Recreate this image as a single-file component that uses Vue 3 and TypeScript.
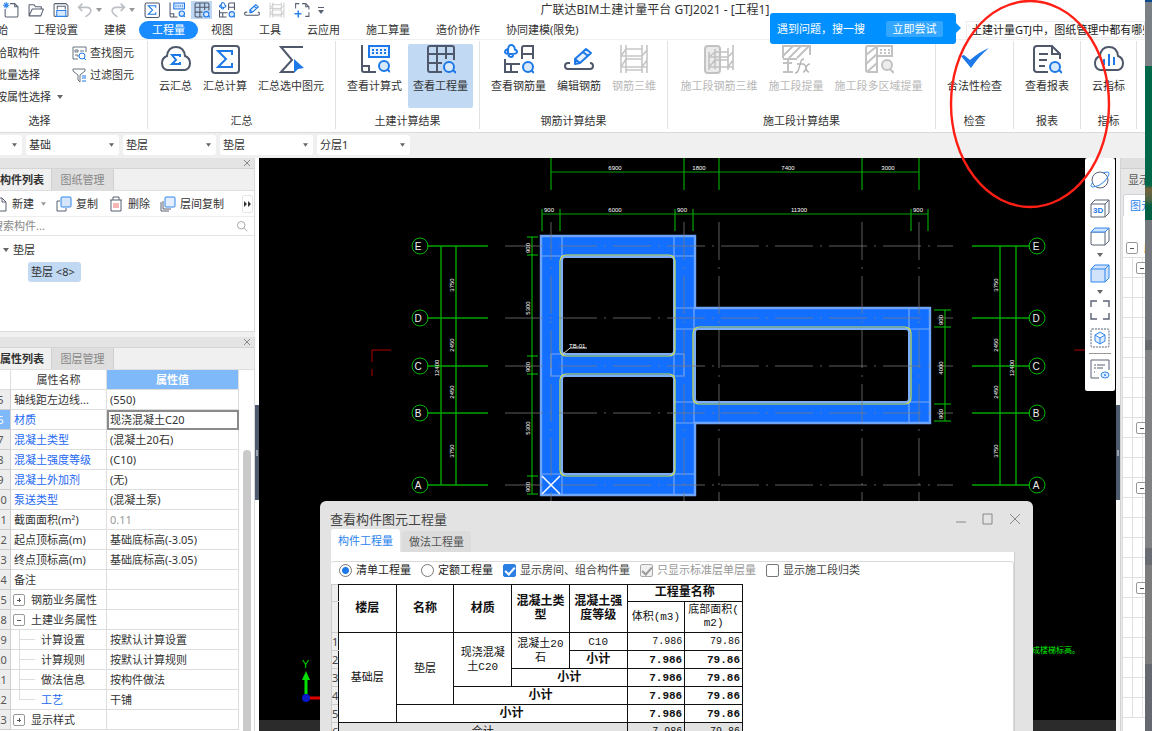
<script setup lang="ts">
import { ref } from 'vue'

interface RibbonItem { icon: string; label: string; active?: boolean; disabled?: boolean }
interface RibbonGroup { title: string; items: RibbonItem[]; wide?: boolean }
interface PropRow { no: string; name: string; value?: string; link?: boolean; kind?: 'plus' | 'minus' | 'child' | 'last'; faint?: boolean; current?: boolean }

const menuTabs = ['开始', '工程设置', '建模', '工程量', '视图', '工具', '云应用', '施工算量', '造价协作', '协同建模(限免)']
const activeTab = ref('工程量')

const quick = [
  { icon: 'new', label: '新建' }, { icon: 'open', label: '打开' }, { icon: 'save', label: '保存' },
  { icon: 'undo', label: '撤销', caret: true }, { icon: 'redo', label: '恢复', caret: true },
  { icon: 'sigma-box', label: '汇总计算' }, { icon: 'calc', label: '查看计算式' },
  { icon: 'grid', label: '查看工程量', active: true }, { icon: 'rebar', label: '查看钢筋量' },
  { icon: 'edit', label: '编辑钢筋' }, { icon: 'rebar3d', label: '钢筋三维', muted: true }, { icon: 'frame', label: '框选' },
]

const groups: RibbonGroup[] = [
  { title: '汇总', items: [
    { icon: 'cloud-sigma', label: '云汇总' }, { icon: 'sigma-box', label: '汇总计算' }, { icon: 'sigma-pick', label: '汇总选中图元' }] },
  { title: '土建计算结果', items: [
    { icon: 'calc', label: '查看计算式' }, { icon: 'grid', label: '查看工程量', active: true }] },
  { title: '钢筋计算结果', items: [
    { icon: 'rebar', label: '查看钢筋量' }, { icon: 'edit', label: '编辑钢筋' }, { icon: 'rebar3d', label: '钢筋三维', disabled: true }] },
  { title: '施工段计算结果', wide: true, items: [
    { icon: 'seg3d', label: '施工段钢筋三维', disabled: true }, { icon: 'segfx', label: '施工段提量', disabled: true },
    { icon: 'segmulti', label: '施工段多区域提量', disabled: true }] },
  { title: '检查', items: [{ icon: 'check', label: '合法性检查' }] },
  { title: '报表', items: [{ icon: 'report', label: '查看报表' }] },
  { title: '指标', items: [{ icon: 'cloud-bar', label: '云指标' }] },
]

const pickers = [
  { label: '楼层', value: '' }, { label: '构件大类', value: '基础' }, { label: '构件类型', value: '垫层' },
  { label: '构件', value: '垫层' }, { label: '分层', value: '分层1' },
]

const props: PropRow[] = [
  { no: '5', name: '轴线距左边线...', value: '(550)' },
  { no: '6', name: '材质', value: '现浇混凝土C20', link: true, current: true },
  { no: '7', name: '混凝土类型', value: '(混凝土20石)', link: true },
  { no: '8', name: '混凝土强度等级', value: '(C10)', link: true },
  { no: '9', name: '混凝土外加剂', value: '(无)', link: true },
  { no: '10', name: '泵送类型', value: '(混凝土泵)', link: true },
  { no: '11', name: '截面面积(m²)', value: '0.11', faint: true },
  { no: '12', name: '起点顶标高(m)', value: '基础底标高(-3.05)' },
  { no: '13', name: '终点顶标高(m)', value: '基础底标高(-3.05)' },
  { no: '14', name: '备注' },
  { no: '15', name: '钢筋业务属性', kind: 'plus' },
  { no: '18', name: '土建业务属性', kind: 'minus' },
  { no: '19', name: '计算设置', value: '按默认计算设置', kind: 'child' },
  { no: '20', name: '计算规则', value: '按默认计算规则', kind: 'child' },
  { no: '21', name: '做法信息', value: '按构件做法', kind: 'child' },
  { no: '22', name: '工艺', value: '干铺', kind: 'last', link: true },
  { no: '23', name: '显示样式', kind: 'plus' },
]

const treeRows = Array.from({ length: 24 }, (_, i) => (i === 0 ? 'root' : [1, 9, 12, 17].includes(i) ? 'node' : 'leaf'))

const axes = [
  { name: 'E', y: 246 }, { name: 'D', y: 318 }, { name: 'C', y: 366 }, { name: 'B', y: 413 }, { name: 'A', y: 485 },
]
const columns = [551, 684, 719, 862, 919]
const upperDims = [{ x: 615, t: '6900' }, { x: 699, t: '1800' }, { x: 788, t: '7400' }, { x: 888, t: '3000' }]
const lowerTicks = [542, 560, 675, 693, 911, 928]
const lowerDims = [{ x: 549, t: '900' }, { x: 615, t: '6000' }, { x: 682, t: '900' }, { x: 799, t: '11300' }, { x: 918, t: '900' }]
const leftTicks = [237, 255, 356, 374, 476, 494]
const rightTicks = [310, 327, 404, 421]
const sideDims = [
  { x: 530, y: 248, t: '900' }, { x: 530, y: 308, t: '5300' }, { x: 530, y: 367, t: '900' }, { x: 530, y: 428, t: '5300' }, { x: 530, y: 487, t: '900' },
  { x: 943, y: 320, t: '900' }, { x: 943, y: 368, t: '4000' }, { x: 943, y: 414, t: '900' },
  { x: 454, y: 285, t: '3750' }, { x: 454, y: 345, t: '2450' }, { x: 454, y: 392, t: '2450' }, { x: 454, y: 451, t: '3750' }, { x: 439, y: 368, t: '12400' },
  { x: 998, y: 285, t: '3750' }, { x: 998, y: 345, t: '2450' }, { x: 998, y: 392, t: '2450' }, { x: 998, y: 451, t: '3750' }, { x: 1014, y: 368, t: '12400' },
]

const mode = ref('bill')
const showRooms = ref(true)
const singleFloor = ref(true)
const bySegment = ref(false)
const question = ref('土建计量GTJ中，图纸管理中都有哪些')
</script>

<template>
  <div class="screen">
    <svg class="defs" aria-hidden="true">
      <symbol id="i-new" viewBox="0 0 30 30"><g fill="none" stroke="#596273" stroke-width="2"><path d="M13 3h9l6 6v17q0 2-2 2H6q-2 0-2-2V13M22 3v6h6" /></g><path d="M6 0v12M0 6h12M2 2l8 8M10 2l-8 8" stroke="#2f86ee" stroke-width="2" /></symbol>
      <symbol id="i-open" viewBox="0 0 30 30"><path d="M2 26V5h9l3 4h11v4M2 26l6-13h21l-5 13z" fill="none" stroke="#596273" stroke-width="2" stroke-linejoin="round" /></symbol>
      <symbol id="i-save" viewBox="0 0 30 30"><path d="M8 14V8h15v6" fill="none" stroke="#596273" stroke-width="2" /><path d="M2 26V5q0-2 2-2h20l4 4v19q0 1-2 1H4q-2 0-2-1z" fill="none" stroke="#596273" stroke-width="2" /><path d="M7 27V16h17v11z" fill="#d8e9fc" stroke="#2f86ee" stroke-width="2" /></symbol>
      <symbol id="i-undo" viewBox="0 0 30 30"><path d="M10 3L3 10l7 7M3 10h15q8 0 8 7 0 4-10 11" fill="none" stroke="#bcc0c6" stroke-width="3" /></symbol>
      <symbol id="i-redo" viewBox="0 0 30 30"><path d="M20 3l7 7-7 7M27 10H12q-8 0-8 7 0 4 10 11" fill="none" stroke="#bcc0c6" stroke-width="3" /></symbol>
      <symbol id="i-frame" viewBox="0 0 30 30"><g fill="none" stroke="#596273" stroke-width="2"><path d="M3 12V3h7M15 3h7l6 6v5M22 3v6h6M28 19v8h-7" /></g><path d="M8 16v13M1 22h13" stroke="#2f86ee" stroke-width="3" /></symbol>
      <symbol id="i-cloud-sigma" viewBox="0 0 30 30"><path d="M6 26q-5-1-5-7 0-5 5-7 1-9 9-9t9 9q5 2 5 7 0 6-5 7z" fill="none" stroke="#4f586b" stroke-width="2" /><path d="M19 13v-2h-8l4 5-4 4h8v-2" fill="none" stroke="#1d78e8" stroke-width="2" /></symbol>
      <symbol id="i-sigma-box" viewBox="0 0 30 30"><rect x="2" y="2" width="27" height="27" rx="3" fill="none" stroke="#4f586b" stroke-width="2" /><path d="M22 11V7H8l8 8-8 8h14v-4" fill="none" stroke="#1d78e8" stroke-width="2" /></symbol>
      <symbol id="i-sigma-pick" viewBox="0 0 30 30"><path d="M27 3H5l11 13L5 28h13" fill="none" stroke="#4f586b" stroke-width="2" /><path d="M18 15l10 9-6 1-4 4z" fill="#1d78e8" /></symbol>
      <symbol id="i-calc" viewBox="0 0 30 30"><path d="M2 1v25q0 2 2 2h12M2 22h7v6" fill="none" stroke="#4f586b" stroke-width="2" /><rect x="9" y="2" width="20" height="11" fill="#eaf3ff" stroke="#1d78e8" stroke-width="2" /><path d="M12 6h15M12 9h15" stroke="#1d78e8" stroke-width="2" stroke-dasharray="2 2" /><circle cx="24" cy="22" r="5" fill="#d9e9fd" stroke="#1d78e8" stroke-width="2" /><path d="M27 25l3 3" stroke="#1d78e8" stroke-width="2" /></symbol>
      <symbol id="i-grid" viewBox="0 0 30 30"><path d="M16 28H4q-2 0-2-2V4q0-2 2-2h22q2 0 2 2v12M2 10h26M2 19h14M11 2v26M20 2v13" fill="none" stroke="#4f586b" stroke-width="2" /><circle cx="23" cy="23" r="5" fill="#d9e9fd" stroke="#1d78e8" stroke-width="2" /><path d="M27 26l3 3" stroke="#1d78e8" stroke-width="2" /></symbol>
      <symbol id="i-rebar" viewBox="0 0 30 30"><path d="M11 5Q10 1 7 1 4 1 4 7t3 6q2 0 2-2M4 5Q1 6 1 8q0 2 6 2t6-2q0-2-3-3" fill="none" stroke="#1d78e8" stroke-width="2" /><path d="M18 15V4q0-2 2-2h9v13M18 10h11M1 15v14M1 20h15M7 20v9M1 28h13" fill="none" stroke="#4f586b" stroke-width="2" /><circle cx="24" cy="23" r="5" fill="#d9e9fd" stroke="#1d78e8" stroke-width="2" /><path d="M27 26l3 3" stroke="#1d78e8" stroke-width="2" /></symbol>
      <symbol id="i-edit" viewBox="0 0 30 30"><path d="M6 19H4q-3 0-3 3t3 3h22q3 0 3-3t-3-3" fill="none" stroke="#4f586b" stroke-width="2" /><path d="M11 20v-5L22 5l5 4-11 10zM11 15l5 4M19 8l5 4" fill="#e7f1fd" stroke="#1d78e8" stroke-width="2" stroke-linejoin="round" /></symbol>
      <symbol id="i-rebar3d" viewBox="0 0 30 30"><path d="M2 1v28M7 1v28M23 1v28M28 1v28M7 5h16M2 12h21M7 15h16M2 23h26M7 26h16M2 12l5-7M23 12l5-6M2 23l5-8M23 23l5-7" fill="none" stroke="#c6c6c6" stroke-width="1.6" /></symbol>
      <symbol id="i-seg3d" viewBox="0 0 30 30"><rect x="1" y="2" width="15" height="27" rx="3" fill="#ebebeb" stroke="#c2c2c2" stroke-width="2" /><path d="M5 8v18M11 5v20M24 4v22M29 1v25M11 8h13M5 13h19M11 16h13M5 23h24M5 13l6-5M24 13l5-5M5 23l6-7M24 23l5-7" fill="none" stroke="#c2c2c2" stroke-width="1.6" /></symbol>
      <symbol id="i-segfx" viewBox="0 0 30 30"><path d="M2 14V2h27v9M2 12L12 2M8 14L20 2M16 14L28 2M2 15h14M7 15v12M2 19h9M2 28h10" fill="none" stroke="#c2c2c2" stroke-width="2" /><path d="M14 29q3 0 4-5l2-7q1-2 3-2M16 20h6M22 20q2 0 3 4 1 4 3 4M29 20q-3 0-4 4-1 4-3 4" fill="none" stroke="#b5b5b5" stroke-width="1.4" /></symbol>
      <symbol id="i-segmulti" viewBox="0 0 30 30"><path d="M2 4q0-2 2-2h9v26H4q-2 0-2-2zM2 11l10-8M2 20l11-10M3 28l10-9M13 2h15v10H13" fill="none" stroke="#c2c2c2" stroke-width="2" /><path d="M16 6h11M16 9h11" stroke="#c2c2c2" stroke-width="2" stroke-dasharray="2 2" /><circle cx="23" cy="21" r="5" fill="#eee" stroke="#c2c2c2" stroke-width="2" /><path d="M26 25l4 4" stroke="#c2c2c2" stroke-width="2" /></symbol>
      <symbol id="i-check" viewBox="0 0 30 30"><path d="M1 12l3-1 6 5Q19 8 29 4 19 12 11 24z" fill="#1d78e8" /></symbol>
      <symbol id="i-report" viewBox="0 0 30 30"><path d="M16 28H5q-3 0-3-3V5q0-3 3-3h15l8 8v5M20 2v8h8M7 10h9M7 16h8M7 22h6" fill="none" stroke="#4f586b" stroke-width="2" /><circle cx="23" cy="23" r="5" fill="#d9e9fd" stroke="#1d78e8" stroke-width="2" /><path d="M27 26l3 3" stroke="#1d78e8" stroke-width="2" /></symbol>
      <symbol id="i-cloud-bar" viewBox="0 0 30 30"><path d="M6 26q-5-1-5-7 0-5 5-7 1-9 9-9t9 9q5 2 5 7 0 6-5 7z" fill="none" stroke="#4f586b" stroke-width="2" /><path d="M10 15v6M15 10v12M20 13v8" stroke="#1d78e8" stroke-width="2" /></symbol>
      <symbol id="i-find" viewBox="0 0 16 16"><path d="M7 14H2V2h13v5M4 5h3v2H4zM9 6h4M4 10h3v2" fill="none" stroke="#6a7280" /><circle cx="11" cy="11" r="3" fill="none" stroke="#1d78e8" /><path d="M13 13l2 2" stroke="#1d78e8" /></symbol>
      <symbol id="i-filter" viewBox="0 0 16 16"><path d="M2 2h12v2L9 8v7l-2-2V8L2 4z" fill="none" stroke="#6a7280" /><path d="M11 9h4M11 11h4M11 14h4" stroke="#1d78e8" /></symbol>
      <symbol id="i-page" viewBox="0 0 16 16"><path d="M1 2h9l4 4v9H1M10 2v4h4" fill="none" stroke="#596273" /></symbol>
      <symbol id="i-copy" viewBox="0 0 16 16"><path d="M4 5H1v10h9v-3" fill="none" stroke="#596273" /><rect x="5" y="1" width="10" height="10" rx="1" fill="#d5e6fb" stroke="#2f86ee" /></symbol>
      <symbol id="i-layer" viewBox="0 0 16 16"><path d="M1 6v9h8M3 5v8h8" fill="none" stroke="#596273" /><rect x="5" y="1" width="10" height="10" rx="1" fill="#e4effd" stroke="#2f86ee" /></symbol>
      <symbol id="i-trash" viewBox="0 0 16 16"><path d="M2 4h12M5 4V1h6v3M3 4v11h10V4" fill="none" stroke="#596273" /><path d="M6 7v5M8 7v5M10 7v5" stroke="#f06a6a" /></symbol>
      <symbol id="i-lens" viewBox="0 0 16 16"><circle cx="7" cy="7" r="5" fill="none" stroke="#8b8b8b" /><path d="M11 11l4 4" stroke="#8b8b8b" /></symbol>
      <symbol id="i-caret" viewBox="0 0 6 4"><path d="M0 0h6L3 4z" fill="currentColor" /></symbol>
      <symbol id="i-close" viewBox="0 0 8 8"><path d="M1 1l6 6M7 1L1 7" stroke="currentColor" /></symbol>
      <symbol id="i-orbit" viewBox="0 0 20 20"><circle cx="10" cy="10" r="8" fill="none" stroke="#596273" /><path d="M3 12q-4 5 0 5 6 0 12-6 6-8 3-9-2 0-5 1" fill="none" stroke="#2f86ee" /></symbol>
      <symbol id="i-cube3d" viewBox="0 0 20 20"><path d="M1 6h14v13H1zM1 6l4-4h14v13l-4 4M15 6l4-4" fill="none" stroke="#596273" /></symbol>
      <symbol id="i-cube" viewBox="0 0 20 20"><path d="M1 6h14v13H2l-1-1zM15 19l4-4V2" fill="none" stroke="#596273" /><path d="M1 6l4-4h14l-4 4z" fill="#cfe2fb" stroke="#2f86ee" /></symbol>
      <symbol id="i-solid" viewBox="0 0 20 20"><path d="M1 6l4-4h14v13l-4 4H1z" fill="#d0e3fb" stroke="#2f86ee" /><path d="M1 6h14v13M15 6l4-4" fill="none" stroke="#2f86ee" /></symbol>
      <symbol id="i-expand" viewBox="0 0 20 20"><path d="M1 7V1h6M13 1h6v6M19 13v6h-6M7 19H1v-6" fill="none" stroke="#596273" stroke-width="1.4" /></symbol>
      <symbol id="i-select3d" viewBox="0 0 20 20"><rect x="1" y="1" width="18" height="18" rx="1" fill="none" stroke="#596273" stroke-dasharray="2 1" /><path d="M10 4l5 3v6l-5 3-5-3V7zM5 7l5 3 5-3M10 10v6" fill="#e2eefd" stroke="#2f86ee" /></symbol>
      <symbol id="i-list" viewBox="0 0 20 20"><path d="M9 19H1V1h18v10M4 6h2M7 6h8M4 9h2M7 9h6M4 13h1" fill="none" stroke="#596273" /><ellipse cx="15" cy="16" rx="4" ry="3" fill="#e2eefd" stroke="#2f86ee" /><circle cx="15" cy="16" r="1" fill="#2f86ee" /></symbol>
    </svg>

    <div class="app">
      <header class="titlebar">
        <div class="quick">
          <button v-for="q in quick" :key="q.icon" class="qbtn" :class="{ on: q.active, split: q.caret, muted: q.muted }" :aria-label="q.label">
            <svg class="i16"><use :href="'#i-' + q.icon" /></svg>
            <svg v-if="q.caret" class="caret pale"><use href="#i-caret" /></svg>
          </button>
          <button class="qmore" aria-label="自定义"><svg viewBox="0 0 6 7"><path d="M0 0h6v1H0zM0 3h6L3 7z" fill="#596273" /></svg></button>
        </div>
        <h1>广联达BIM土建计量平台 GTJ2021 - [工程1]</h1>
      </header>

      <nav class="menu">
        <button v-for="t in menuTabs" :key="t" :class="{ on: t === activeTab }" @click="activeTab = t">{{ t }}</button>
        <input v-model="question" class="ask" type="text" aria-label="搜索">
        <div class="hint">
          <span>遇到问题，搜一搜</span>
          <button>立即尝试</button>
        </div>
      </nav>

      <section class="ribbon">
        <div class="group pickgroup">
          <div class="picks">
            <div class="pickcol">
              <button>拾取构件</button>
              <button>批量选择</button>
              <button>按属性选择 <svg class="caret"><use href="#i-caret" /></svg></button>
            </div>
            <div class="pickcol">
              <button><svg class="i16"><use href="#i-find" /></svg>查找图元</button>
              <button><svg class="i16"><use href="#i-filter" /></svg>过滤图元</button>
            </div>
          </div>
          <div class="gtitle">选择</div>
        </div>
        <div v-for="g in groups" :key="g.title" class="group" :class="{ wide: g.wide }">
          <div class="gitems">
            <button v-for="it in g.items" :key="it.label" class="rbtn" :class="{ on: it.active }" :disabled="it.disabled">
              <svg class="i30"><use :href="'#i-' + it.icon" /></svg>
              <span>{{ it.label }}</span>
            </button>
          </div>
          <div class="gtitle">{{ g.title }}</div>
        </div>
      </section>

      <div class="pickers">
        <label v-for="p in pickers" :key="p.label" class="picker">
          <select :aria-label="p.label"><option>{{ p.value }}</option></select>
          <svg class="caret"><use href="#i-caret" /></svg>
        </label>
      </div>

      <main class="work">
        <aside class="left">
          <section class="panel components">
            <div class="phead"><button aria-label="关闭"><svg class="i8"><use href="#i-close" /></svg></button></div>
            <div class="ptabs"><button class="on">构件列表</button><button>图纸管理</button></div>
            <div class="ptools">
              <button class="tnew"><svg class="i16"><use href="#i-page" /></svg>新建<svg class="caret pale"><use href="#i-caret" /></svg></button>
              <button><svg class="i16"><use href="#i-copy" /></svg>复制</button>
              <button><svg class="i16"><use href="#i-trash" /></svg>删除</button>
              <button><svg class="i16"><use href="#i-layer" /></svg>层间复制</button>
              <button class="tmore" aria-label="更多"><svg viewBox="0 0 8 6"><path d="M0 0l3 3-3 3zM4 0l3 3-3 3z" fill="#333" /></svg></button>
            </div>
            <div class="psearch"><input type="text" placeholder="搜索构件..." aria-label="搜索构件"><svg class="i12"><use href="#i-lens" /></svg></div>
            <div class="ctree">
              <div class="cnode"><svg class="caret"><use href="#i-caret" /></svg>垫层</div>
              <button class="cleaf">垫层 &lt;8&gt;</button>
            </div>
          </section>
          <section class="panel attrs">
            <div class="phead"><button aria-label="关闭"><svg class="i8"><use href="#i-close" /></svg></button></div>
            <div class="ptabs"><button class="on">属性列表</button><button>图层管理</button></div>
            <div class="attrbody">
              <table class="props">
                <colgroup><col class="c0"><col class="c1"><col class="c2"></colgroup>
                <thead><tr><th></th><th>属性名称</th><th class="hot">属性值</th></tr></thead>
                <tbody>
                  <tr v-for="r in props" :key="r.no" :class="{ current: r.current }">
                    <th scope="row">{{ r.no }}</th>
                    <td :class="[r.kind, { link: r.link }]">
                      <div class="cell">
                        <button v-if="r.kind === 'plus'" class="tog" aria-label="展开"><i class="h"></i><i class="v"></i></button>
                        <button v-else-if="r.kind === 'minus'" class="tog" aria-label="收起"><i class="h"></i></button>
                        <i v-else-if="r.kind" class="branch"></i>
                        <span>{{ r.name }}</span>
                      </div>
                    </td>
                    <td :class="{ faint: r.faint }">{{ r.value }}</td>
                  </tr>
                </tbody>
              </table>
              <div class="vbar"></div>
            </div>
          </section>
        </aside>
        <div class="splitter"><i></i></div>

        <section class="canvas">
          <svg class="drawing" viewBox="259 158 857 573" preserveAspectRatio="xMinYMin slice">
            <rect x="259" y="720" width="857" height="11" fill="#2b2b2b" />
            <g stroke="#00a400" fill="none">
              <path d="M551 172H919" />
              <path v-for="x in columns" :key="'u' + x" :d="`M${x} 158V190`" stroke-width="1.2" />
              <path d="M542 214H928" />
              <path v-for="x in lowerTicks" :key="'l' + x" :d="`M${x} 209V231`" stroke-width="1.2" />
              <path d="M532 237V494" stroke="#00c800" />
              <path v-for="y in leftTicks" :key="'a' + y" :d="`M527 ${y}h11`" stroke="#00c800" />
              <path d="M945 310V421" stroke="#00c800" />
              <path v-for="y in rightTicks" :key="'b' + y" :d="`M934 ${y}h17`" stroke="#00c800" />
              <path d="M441 246V485M456 246V485M1000 246V485M1016 246V485" stroke-width="1.4" />
            </g>
            <path d="M540 235H696V307H931V424H696V496H540z" fill="#136fff" />
            <path d="M541 236H695V308H930V423H695V495H541z" fill="none" stroke="#6fa5f7" stroke-width="2.4" />
            <g fill="none" stroke="#78a9f6" stroke-width="1.2">
              <path d="M562 237V495M674 237V495M541 256H694M541 474H694" />
              <path d="M551 354H684V376H551z" />
              <path d="M675 308H694M675 329H930M675 402H930M694 308V423M909 308V423M675 423H694" />
            </g>
            <g fill="#000" stroke="#7eaef8" stroke-width="2">
              <rect x="562" y="257" width="112" height="97" rx="3" />
              <rect x="562" y="376" width="112" height="98" rx="3" />
              <rect x="695" y="329" width="214" height="73" rx="3" />
            </g>
            <g fill="none" stroke="#cfe04b" stroke-width="1.2">
              <rect x="560" y="255" width="115" height="101" rx="6" />
              <rect x="560" y="374" width="115" height="102" rx="6" />
              <rect x="693" y="327" width="218" height="77" rx="6" />
            </g>
            <g fill="none" stroke="#7b7b7b" stroke-opacity=".75" stroke-dasharray="38 7 2 7">
              <path v-for="a in axes" :key="'h' + a.name" :d="`M505 ${a.y}H953`" />
              <path v-for="x in columns" :key="'v' + x" :d="`M${x} 222V502`" />
            </g>
            <path d="M542 476l18 18M560 476l-18 18" stroke="#fff" stroke-width="1.5" />
            <path d="M563 354l7-6h17" stroke="#ddd" fill="none" />
            <text x="569" y="348" class="dim">TB-01</text>
            <g v-for="a in axes" :key="a.name">
              <path :d="`M427 ${a.y}h61M972 ${a.y}h58`" stroke="#00a400" stroke-width="1.4" />
              <circle cx="420" :cy="a.y" r="8" fill="none" stroke="#00b400" />
              <circle cx="1037" :cy="a.y" r="8" fill="none" stroke="#00b400" />
              <text x="418" :y="a.y + 4" class="axis">{{ a.name }}</text>
              <text x="1036" :y="a.y + 4" class="axis">{{ a.name }}</text>
            </g>
            <text v-for="d in upperDims" :key="d.x" :x="d.x" y="170" class="dim mid">{{ d.t }}</text>
            <text v-for="d in lowerDims" :key="d.x" :x="d.x" y="212" class="dim mid">{{ d.t }}</text>
            <text v-for="(d, i) in sideDims" :key="i" :transform="`translate(${d.x} ${d.y}) rotate(-90)`" class="dim mid">{{ d.t }}</text>
            <path d="M372 362V350H391M372 369V376M1074 350h12" fill="none" stroke="#b00000" />
            <text x="1024" y="653" class="note">拟成楼梯标高。</text>
            <path d="M306 694V676" stroke="#00e000" stroke-width="3" />
            <path d="M306 671l4 9h-8z" fill="#00e000" />
            <path d="M309 698h12" stroke="#e00000" stroke-width="3" />
            <circle cx="306" cy="698" r="4" fill="#0618c8" />
            <text x="302" y="668" class="gizmo">Y</text>
          </svg>

          <div class="viewbar">
            <button aria-label="动态观察"><svg class="i20"><use href="#i-orbit" /></svg></button>
            <button class="three" aria-label="三维"><svg class="i20"><use href="#i-cube3d" /></svg><b>3D</b></button>
            <button aria-label="俯视"><svg class="i20"><use href="#i-cube" /></svg></button>
            <svg class="caret"><use href="#i-caret" /></svg>
            <button aria-label="实体"><svg class="i20"><use href="#i-solid" /></svg></button>
            <svg class="caret"><use href="#i-caret" /></svg>
            <button aria-label="全屏"><svg class="i20"><use href="#i-expand" /></svg></button>
            <button aria-label="局部三维"><svg class="i20"><use href="#i-select3d" /></svg></button>
            <hr>
            <button aria-label="显示设置"><svg class="i20"><use href="#i-list" /></svg></button>
          </div>

          <section class="dialog" role="dialog" aria-labelledby="dlg">
            <div class="dhead">
              <h2 id="dlg">查看构件图元工程量</h2>
              <button aria-label="最小化"><svg viewBox="0 0 12 12"><path d="M1 9h10" stroke="#888" /></svg></button>
              <button aria-label="最大化"><svg viewBox="0 0 12 12"><path d="M1 1h9v10H1z" fill="none" stroke="#888" /></svg></button>
              <button aria-label="关闭"><svg viewBox="0 0 12 12"><path d="M1 1l10 10M11 1L1 11" stroke="#888" /></svg></button>
            </div>
            <div class="dtabs"><button class="on">构件工程量</button><button>做法工程量</button></div>
            <div class="dbody">
              <div class="dpane">
                <div class="opts">
                  <label><input v-model="mode" type="radio" name="mode" value="bill">清单工程量</label>
                  <label><input v-model="mode" type="radio" name="mode" value="quota">定额工程量</label>
                  <label class="soft"><input v-model="showRooms" type="checkbox">显示房间、组合构件量</label>
                  <label class="off"><input v-model="singleFloor" type="checkbox" disabled>只显示标准层单层量</label>
                  <label class="soft"><input v-model="bySegment" type="checkbox">显示施工段归类</label>
                </div>
                <table class="qty">
                  <colgroup><col class="n"><col><col><col><col><col><col><col></colgroup>
                  <thead>
                    <tr class="h1"><th class="n"></th><th rowspan="2">楼层</th><th rowspan="2">名称</th><th rowspan="2">材质</th><th rowspan="2">混凝土类型</th><th rowspan="2">混凝土强度等级</th><th colspan="2">工程量名称</th></tr>
                    <tr class="h2"><th class="n"></th><td>体积(m3)</td><td>底部面积(<br>m2)</td></tr>
                  </thead>
                  <tbody>
                    <tr><th class="n">1</th><td rowspan="5">基础层</td><td rowspan="4">垫层</td><td rowspan="3">现浇混凝土C20</td><td rowspan="2">混凝土20石</td><td>C10</td><td class="num">7.986</td><td class="num">79.86</td></tr>
                    <tr class="sub"><th class="n">2</th><th>小计</th><td class="num">7.986</td><td class="num">79.86</td></tr>
                    <tr class="sub"><th class="n">3</th><th colspan="2">小计</th><td class="num">7.986</td><td class="num">79.86</td></tr>
                    <tr class="sub"><th class="n">4</th><th colspan="3">小计</th><td class="num">7.986</td><td class="num">79.86</td></tr>
                    <tr class="sub"><th class="n">5</th><th colspan="4">小计</th><td class="num">7.986</td><td class="num">79.86</td></tr>
                    <tr class="sum"><th class="n">6</th><td colspan="5">合计</td><td class="num">7.986</td><td class="num">79.86</td></tr>
                  </tbody>
                </table>
              </div>
            </div>
          </section>
        </section>
        <div class="splitter right"><i></i></div>

        <aside class="side">
          <div class="shead"></div>
          <div class="stitle">显示设置</div>
          <div class="stabs"><button>图元显示</button></div>
          <div class="stree">
            <div v-for="(r, i) in treeRows" :key="i" class="srow" :class="r">
              <button v-if="r !== 'leaf'" class="tog" aria-label="收起"><i class="h"></i></button>
              <span v-if="r === 'root'">所有构件</span>
            </div>
          </div>
        </aside>
      </main>
    </div>

    <div class="backdrop"></div>
    <svg class="mark" viewBox="0 0 164 210" aria-hidden="true"><ellipse cx="82" cy="104" rx="79" ry="103" fill="none" stroke="#ff1f14" stroke-width="2.4" /></svg>
  </div>
</template>

<style>
body { margin: 0; background: #f0f0f0; }
</style>

<style scoped>
* { box-sizing: border-box; }
.screen { position: relative; display: flex; height: 100vh; overflow: hidden; font: 11px/18px "Noto Sans", "Noto Sans CJK SC", sans-serif; color: #333; }
.defs { position: absolute; width: 0; height: 0; }
button, input, select { font: inherit; color: inherit; border: 0; margin: 0; padding: 0; background: none; }
button { white-space: nowrap; flex: none; }
svg { display: block; flex: none; }
.i8 { width: 8px; height: 8px; }
.i12 { width: 12px; height: 12px; }
.i16 { width: 16px; height: 16px; }
.i20 { width: 20px; height: 20px; }
.i30 { width: 30px; height: 30px; }
.caret { width: 6px; height: 4px; color: #666; }
.caret.pale { color: #999; }
.app { flex: 1; min-width: 0; display: flex; flex-direction: column; overflow: hidden; background: #fff; }
.backdrop { width: 7px; flex: none; background: linear-gradient(#0b4a8c 0 2px, #7b8084 2px 66px, #006848 66px 185px, #75613c 189px, #4a6446 200px, #006041 206px 220px, #74787c 220px 340px, #66696d 340px 350px, #808284 350px 548px, #696d73 548px 565px, #7c7c7c 565px 664px, #65696f 664px); }
.mark { position: absolute; top: 0; right: 40px; width: 164px; height: 210px; pointer-events: none; }

.titlebar { display: flex; height: 20px; flex: none; }
.quick { display: flex; margin-left: -2px; align-items: center; }
.qbtn { width: 25px; height: 18px; display: flex; align-items: center; justify-content: center; gap: 3px; }
.qbtn.split { width: 33px; }
.qbtn.on { background: linear-gradient(90deg, transparent 2px, #bfd7f2 2px 23px, transparent 23px); }
.qmore { width: 14px; display: flex; justify-content: center; }
.qmore svg { width: 6px; height: 7px; }
h1 { flex: 1; margin: 0; padding-right: 163px; font-size: 12px; font-weight: 400; line-height: 20px; text-align: center; white-space: nowrap; }
.menu { position: relative; display: flex; height: 19px; flex: none; margin-left: -27px; border-bottom: 1px solid #f0f0f0; box-sizing: content-box; }
.menu > button { padding: 0 13px; line-height: 18px; height: 18px; margin-top: 1px; border-radius: 9px; }
.menu > button.on { background: #1a8cff; color: #fff; }
.ask { width: 179px; height: 17px; margin: 1px 0 0 auto; padding-left: 4px; border: 1px solid #ececec; color: #222; background: #fff; }
.hint { position: absolute; right: 189px; top: -7px; z-index: 3; width: 186px; height: 31px; display: flex; align-items: center; padding: 0 13px 0 7px; justify-content: space-between; background: #0090ff; color: #fff; border-radius: 3px; }
.hint::after { content: ""; position: absolute; left: 100%; top: 10px; border: 5px solid transparent; border-left-color: #0090ff; border-right: 0; }
.hint button { width: 57px; height: 16px; line-height: 16px; background: #33a6ff; border-radius: 2px; }

.ribbon { display: flex; height: 93px; flex: none; border-bottom: 1px solid #dadada; }
.group { position: relative; flex: none; padding: 4px 6px 0; border-right: 1px solid transparent; border-image: linear-gradient(transparent 2px, #e2e2e2 2px 88px, transparent 88px) 1; }
.group.wide { min-width: 268px; }
.gitems { display: flex; gap: 1px; height: 64px; justify-content: center; }
.rbtn { display: flex; flex-direction: column; align-items: center; gap: 3px; padding: 0 5px; border-radius: 2px; height: 64px; }
.rbtn.on { background: #c1d9f3; }
.rbtn:disabled { color: #b8b8b8; }
.gtitle { text-align: center; margin-top: 4px; }
.pickgroup { width: 216px; margin-left: -68px; padding: 2px 0 0; }
.picks { display: flex; height: 66px; padding-left: 64px; gap: 8px; }
.pickcol button { display: flex; align-items: center; height: 22px; gap: 3px; }
.pickcol:first-child button { gap: 6px; }

.pickers { display: flex; gap: 4px; height: 25px; flex: none; padding: 2px 0 3px; margin-left: -71px; background: #f0f0f0; }
.picker { position: relative; width: 93px; height: 20px; }
.picker select { width: 100%; height: 20px; appearance: none; background: #fff; border-radius: 3px; padding-left: 3px; }
.picker .caret { position: absolute; right: 5px; top: 8px; pointer-events: none; width: 5px; height: 4px; }

.work { flex: 1; min-height: 0; display: flex; background: #f0f0f0; }
.left { width: 255px; flex: none; overflow: hidden; display: flex; flex-direction: column; gap: 5px; }
.panel { background: #fff; border-right: 1px solid #dadada; border-bottom: 1px solid #dcdcdc; }
.components { height: 174px; flex: none; }
.attrs { flex: 1; min-height: 0; overflow: hidden; border-bottom: 0; }
.phead { height: 11px; background: #e4e4e4; border-bottom: 1px solid #d4d4d4; display: flex; justify-content: flex-end; align-items: center; padding-right: 3px; color: #888; }
.ptabs { display: flex; height: 22px; background: #f0f0f0; border-bottom: 1px solid #dedede; }
.ptabs button { height: 21px; width: 62px; background: #dedede; color: #888; border: 1px solid #d0d0d0; border-width: 0 1px 0 0; }
.ptabs button.on { width: 52px; padding-right: 8px; text-align: right; background: #f0f0f0; color: #333; font-weight: 600; }
.ptools { display: flex; align-items: center; height: 26px; gap: 10px; border-bottom: 1px solid #eee; }
.ptools button { display: flex; align-items: center; gap: 4px; }
.ptools .tnew { margin-left: -8px; }
.ptools .tnew .caret { margin-left: 3px; width: 5px; }
.ptools .tmore { width: 11px; height: 18px; justify-content: center; border: 1px solid #e6e6e6; border-radius: 2px; margin-left: auto; margin-right: 1px; }
.tmore svg { width: 8px; height: 6px; }
.psearch { display: flex; align-items: center; height: 19px; border-bottom: 1px solid #e4e4e4; padding-right: 6px; }
.psearch input { flex: 1; min-width: 0; margin-left: -8px; }
.psearch input::placeholder { color: #8a8a8a; opacity: 1; }
.ctree { padding-top: 5px; }
.cnode { display: flex; align-items: center; gap: 4px; padding-left: 3px; height: 18px; }
.cleaf { display: block; margin: 3px 0 0 28px; padding: 0 6px 0 3px; height: 20px; background: #c1d9f3; border-radius: 3px; }
.attrbody { display: flex; align-items: flex-start; gap: 4px; }
.props { width: 248px; flex: none; margin-left: -9px; table-layout: fixed; border-collapse: separate; border-spacing: 0; }
.c0 { width: 20px; } .c1 { width: 96px; } .c2 { width: 132px; }
.props th, .props td { height: 20px; padding: 0 3px; line-height: 18px; font-weight: 400; text-align: left; border: 1px solid #dedede; border-width: 0 1px 1px 0; white-space: nowrap; }
.props thead th { text-align: center; }
.props thead th.hot { background: #7fb9f9; color: #fff; font-weight: 600; }
.props tbody th { background: #ededed; text-align: center; padding: 0; border-color: #cfcfcf; color: #555; }
.props tr.current th { background: #7fb9f9; color: #fff; }
.props tr.current td:last-child { outline: 2px solid #8a8a8a; outline-offset: -2px; }
.props td.link { color: #2468f2; }
.props td.faint { color: #999; }
.props td.plus, .props td.minus, .props td.child, .props td.last { padding-left: 2px; }
.cell { display: flex; align-items: center; height: 19px; }
.tog { position: relative; display: block; flex: none; width: 12px; height: 12px; border: 1px solid #999; border-radius: 2px; background: #fff; margin-right: 6px; }
.tog .h, .tog .v { position: absolute; background: #555; }
.tog .h { left: 3px; top: 5px; height: 1px; width: 4px; }
.tog .v { top: 3px; left: 5px; width: 1px; height: 4px; }
.branch { flex: none; width: 16px; height: 19px; margin: 0 6px; background: linear-gradient(#ddd, #ddd) 0 9px / 16px 1px no-repeat, linear-gradient(#ddd, #ddd) 0 0 / 1px 100% no-repeat; }
.last .branch { background: linear-gradient(#ddd, #ddd) 0 9px / 16px 1px no-repeat, linear-gradient(#ddd, #ddd) 0 0 / 1px 10px no-repeat; }
.vbar { width: 8px; height: 300px; margin-top: 80px; background: #c9c9c9; border-radius: 4px; }
.splitter { width: 4px; flex: none; background: #fff; padding-top: 247px; }
.splitter i { display: block; height: 95px; background: linear-gradient(#9aa3af, #9aa3af) center / 2px 6px no-repeat #4f5c6d; }
.splitter.right { background: #f6f6f6; }

.canvas { position: relative; flex: 1; min-width: 0; overflow: hidden; background: #000; }
.drawing { position: absolute; width: 100%; height: 100%; }
.dim { font: 6px "Liberation Sans Narrow", "Liberation Sans", sans-serif; fill: #fff; }
.mid { text-anchor: middle; }
.axis { font: 10px "Liberation Sans", sans-serif; fill: #eee; text-anchor: middle; }
.note { font: 8px "Noto Sans CJK SC", sans-serif; fill: #00f000; }
.gizmo { font: 11px "Liberation Sans", sans-serif; fill: #00d000; }
.viewbar { position: absolute; right: 1px; top: 0; width: 30px; height: 233px; padding-top: 12px; background: #fff; border-radius: 2px; display: flex; flex-direction: column; align-items: center; gap: 8px; }
.viewbar .caret { margin: -1px 0 -2px; }
.viewbar hr { width: 22px; height: 1px; border: 0; margin: -3px 0; background: #999; }
.three { position: relative; }
.three b { position: absolute; left: 3px; top: 8px; font: bold 8px/9px "Liberation Sans", sans-serif; color: #1d78e8; }

.dialog { position: absolute; left: 61px; top: 343px; bottom: 0; width: 713px; background: #e3e3e3; border-radius: 6px 6px 0 0; overflow: hidden; display: flex; flex-direction: column; }
.dhead { display: flex; align-items: center; gap: 15px; height: 28px; padding: 7px 12px 0 10px; flex: none; }
.dhead h2 { margin: 0; flex: 1; font-size: 13px; line-height: 20px; font-weight: 400; color: #444; }
.dhead button svg { width: 12px; height: 12px; }
.dtabs { display: flex; align-items: flex-end; gap: 2px; height: 23px; padding-left: 11px; flex: none; }
.dtabs button { width: 69px; height: 21px; line-height: 19px; background: #dcdcdc; color: #555; border-radius: 3px 3px 0 0; }
.dtabs button.on { height: 23px; background: #fff; color: #2a84ee; }
.dbody { flex: 1; margin: 0 18px 0 11px; padding-top: 9px; background: #fff; overflow: hidden; border-right: 1px solid #cfcfcf; }
.dpane { border: 1px solid #dadada; border-left: 0; border-radius: 3px 3px 0 0; }
.opts { display: flex; gap: 10px; height: 22px; align-items: center; padding: 0 0 6px 8px; color: #222; }
.opts label { display: flex; align-items: center; gap: 4px; white-space: nowrap; }
.opts .soft { color: #444; }
.opts .off { color: #999; }
.opts input { appearance: none; position: relative; width: 13px; height: 13px; border: 1px solid #777; background: #fff; flex: none; }
.opts input[type="radio"] { border-radius: 50%; }
.opts input[type="radio"]:checked { background: radial-gradient(circle, #1d78e8 3px, #fff 4px); }
.opts input[type="checkbox"] { border-radius: 2px; }
.opts input[type="checkbox"]:checked { background: #2c7fe2; border-color: #2c7fe2; }
.opts input[type="checkbox"]:checked::after { content: ""; position: absolute; left: 3px; top: 0; width: 4px; height: 8px; border: solid #fff; border-width: 0 2px 2px 0; transform: rotate(42deg); }
.opts input:disabled:checked { background: #f0f0f0; border-color: #aaa; }
.opts input:disabled:checked::after { border-color: #999; }
.qty { width: 412px; table-layout: fixed; border-collapse: collapse; font: 11px/14px "Liberation Mono", "Noto Sans CJK SC", monospace; color: #111; background: #fff; border-top: 1px solid #000; }
.qty col.n { width: 7px; }
.qty th, .qty td { border: 1px solid #111; padding: 0 2px; text-align: center; height: 18px; word-break: break-all; }
.qty thead th { font-size: 12px; line-height: 14px; }
.qty .h1 th { height: 17px; }
.qty .h2 td { height: 31px; padding: 0; line-height: 13px; }
.qty th.n { font: 11px/14px "Noto Sans", sans-serif; background: #eee; color: #444; padding: 0; border-color: #ccc #111 #ccc #ccc; overflow: hidden; }
.qty .sub th:not(.n) { font-size: 12px; }
.qty .num { text-align: right; font-size: 10px; }
.qty .sub .num { font-size: 11px; font-weight: 700; }
.qty .sum td { background: #e2e2e2; }

.side { width: 25px; flex: none; overflow: hidden; background: #e8e8e8; border-left: 1px solid #d4d4d4; white-space: nowrap; display: flex; flex-direction: column; }
.shead { height: 11px; flex: none; background: #dfdfdf; border-bottom: 1px solid #d0d0d0; }
.stitle { height: 25px; line-height: 22px; padding-left: 7px; flex: none; color: #555; }
.stabs { height: 22px; flex: none; padding-left: 2px; }
.stabs button { height: 22px; padding: 0 6px; background: #fff; color: #2a84ee; border: 1px solid #cfd3da; border-bottom: 0; border-radius: 3px 0 0 0; }
.stree { flex: 1; background: #fff; margin-left: 1px; padding-top: 22px; border-left: 1px solid #ddd; overflow: hidden; }
.srow { height: 20px; border-bottom: 1px solid #e0e0e0; display: flex; align-items: center; padding-left: 3px; background: linear-gradient(#e0e0e0, #e0e0e0) 9px 0 / 1px 100% no-repeat, linear-gradient(#e6e6e6, #e6e6e6) 19px 0 / 1px 100% no-repeat; }
.srow.root { background: #fff; color: #d9822b; }
.srow.node { padding-left: 13px; }
</style>
